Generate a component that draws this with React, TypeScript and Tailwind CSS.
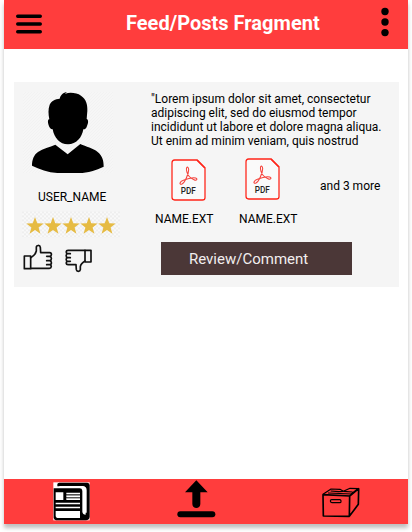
const STAR_CENTERS = [75, 129, 183, 237, 291];

function MenuIcon() {
  return (
    <svg className="h-5 w-[27px]" viewBox="0 0 27 20" stroke="#000" strokeWidth="3.4" strokeLinecap="round">
      <path d="M2.7 2.3H25.3M2.7 10H25.3M2.7 17.7H25.3" />
    </svg>
  );
}

function MoreIcon() {
  return (
    <svg className="h-[30px] w-2" viewBox="0 0 8 30">
      <circle cx="4" cy="4.5" r="3.7" />
      <circle cx="4" cy="15" r="3.7" />
      <circle cx="4" cy="25.6" r="3.7" />
    </svg>
  );
}

function Avatar() {
  return (
    <svg className="ml-[9px] h-[81px] w-[90px]" viewBox="39 42 270 243">
      <defs>
        <pattern id="stripes" width="9" height="9" patternUnits="userSpaceOnUse">
          <path d="M0 9L9 0" stroke="#eeeeee" strokeWidth="1.5" />
        </pattern>
      </defs>
      <rect x="39" y="42" width="270" height="243" fill="#f6f6f6" />
      <rect x="39" y="42" width="270" height="243" fill="url(#stripes)" />
      <path d="M149 62C152 51 160 43 171 43C167 45 166 46 166 47C181 42 201 45 213 53C229 63 233 82 232 99L230 123C236 125 235 135 231 144C229 151 226 154 220 154C216 179 199 199 174 199C149 199 133 180 128 154C121 154 118 149 116 142C113 132 113 124 118 124C115 108 114 94 119 80C124 69 136 63 149 62Z" />
      <path d="M136 200L173 229L211 198C228 206 249 210 263 222C278 234 281 249 281 266C258 276 235 285 207 285H142C114 283 88 274 66 263C66 246 71 231 84 222C99 212 119 207 136 200Z" />
    </svg>
  );
}

function Stars() {
  return (
    <svg className="ml-2 mt-[7px] h-[27px] w-[98px]" viewBox="36 95 294 81">
      <defs>
        <pattern id="checks" width="12" height="12" patternUnits="userSpaceOnUse">
          <rect width="12" height="12" fill="#f9f9f9" />
          <path d="M0 0H6V6H0ZM6 6H12V12H6Z" fill="#eeeeee" />
        </pattern>
      </defs>
      <rect x="36" y="95" width="294" height="80" fill="url(#checks)" />
      {STAR_CENTERS.map((x) => (
        <path
          key={x}
          transform={`translate(${x} 141)`}
          fill="#e6bb43"
          d="M0 -28L6.8 -9.2L26 -8.8L10.8 3.2L16.3 22.5L0 11.3L-16.3 22.5L-10.8 3.2L-26 -8.8L-6.8 -9.2Z"
        />
      ))}
    </svg>
  );
}

function Thumbs() {
  return (
    <svg className="ml-[5px] mt-[5px] h-[34px] w-[80px]" viewBox="27 192 240 102" fill="none" stroke="#111" strokeWidth="5" strokeLinejoin="round" strokeLinecap="round">
      <g>
        <path d="M43 231H62V269H43Z" />
        <path d="M62 236C71 231 77 225 79 216V205C79 198 90 197 91 205L92 221H119C126 221 126 231 119 232H110M119 232C126 233 126 244 119 245H110M119 245C126 246 126 257 119 257H110M119 257C126 258 125 268 118 268H62" />
      </g>
      <g>
        <path d="M225 214H243V249H225Z" />
        <path d="M225 214H174C167 214 167 223 173 224H181M173 224C167 225 167 235 173 236H181M173 236C167 237 167 246 173 247H181M173 247C167 248 167 257 174 257H198L199 272C200 279 210 279 211 272V263C212 255 218 250 225 246" />
      </g>
    </svg>
  );
}

function PdfIcon() {
  return (
    <svg className="h-[42px] w-[35px]" viewBox="80 28 105 126" fill="none">
      <path d="M91 31H158L182 55V144Q182 151 174 151H91Q83 151 83 143V39Q83 31 91 31Z" fill="#fafafa" stroke="#ff2519" strokeWidth="3.8" />
      <path d="M158 31L182 55" stroke="#ff2519" strokeWidth="5" />
      <path d="M128 68C123 50 132 48 133 60C133 73 121 99 113 103C103 106 106 96 117 92C129 87 145 83 154 85C161 88 157 94 149 90C139 86 131 78 128 68Z" stroke="#f5423b" strokeWidth="3.2" />
      <g transform="translate(109 134) scale(0.98 1)">
        <text fill="#222" fontSize="25" fontWeight="500" className="font-['Roboto',sans-serif]">PDF</text>
      </g>
    </svg>
  );
}

function FileItem({ raised = false }: { raised?: boolean }) {
  return (
    <div className="flex w-[84px] flex-col">
      <div className={raised ? "ml-[10px] h-[53px]" : "ml-5 h-[53px] pt-px"}>
        <PdfIcon />
      </div>
      <span className="ml-1 mt-px text-[12px] leading-[14px]">NAME.EXT</span>
    </div>
  );
}

function NewsIcon() {
  return (
    <svg className="h-[39px] w-[37px]" viewBox="159 35 111 117">
      <rect x="160" y="36" width="109" height="114" fill="#fff" />
      <path d="M172 48V42Q172 37 178 37H262Q269 38 269 45V140Q267 150 258 150H168Q162 149 161 142V54H239Q246 54 247 61V124Q248 133 257 133V55Q256 48 248 48Z" />
      <path d="M178 50H248Q257 51 257 60V127" fill="none" stroke="#fff" strokeWidth="6" />
      <path d="M167 66H190V89H167ZM199 67H240V72H199ZM199 76H240V80H199ZM199 84H240V89H199ZM167 97H240V102H167ZM167 109H240V114H167ZM167 122H240V143H172Q167 142 167 137Z" fill="#fff" />
      <path d="M199 75H240M199 83H240" stroke="#aaa" strokeWidth="3" />
    </svg>
  );
}

function UploadIcon() {
  return (
    <svg className="h-[38px] w-[39px]" viewBox="80 29 117 114">
      <path d="M138 30L172 66H150V101C150 117 126 117 126 101V66H104Z" />
      <path d="M90 132H186" stroke="#000" strokeWidth="18" strokeLinecap="round" />
    </svg>
  );
}

function BoxIcon() {
  return (
    <svg className="h-[31px] w-[38px]" viewBox="65 51 114 93" fill="none" stroke="#000" strokeWidth="5" strokeLinejoin="round">
      <path d="M68 74L148 78L147 139L69 138ZM148 78L175 56L174 103L147 139" />
      <path d="M68 73L92 57L119 58L129 64L149 55L175 56M83 69L153 72L170 58M91 63L115 65L128 64M130 64L157 66" strokeWidth="3.5" />
      <path d="M94 89H119Q123 90 122 95Q122 98 118 98H95Q90 97 90 93Q90 89 94 89Z" strokeWidth="3.5" />
    </svg>
  );
}

export default function App() {
  return (
    <div className="h-[532px] w-[412px] overflow-hidden bg-white pl-1 font-['Roboto',sans-serif] text-black">
      <main className="flex h-[524px] w-[404px] flex-col bg-white shadow-[0_4px_4px_rgba(0,0,0,0.25)]">
        <header className="flex h-[49px] shrink-0 items-start bg-[#ff3d3d]">
          <div className="ml-[11px] mt-[14px]"><MenuIcon /></div>
          <h1 className="ml-[84px] mt-[11px] w-[200px] whitespace-nowrap text-[20px] font-bold leading-6 tracking-[0.02px] text-white">Feed/Posts Fragment</h1>
          <div className="ml-[55px] mt-[7px]"><MoreIcon /></div>
        </header>

        <section className="flex-1 pl-[10px] pt-[33px]">
          <article className="flex h-[205px] w-[385px] bg-[#f5f5f5]">
            <div className="flex w-[137px] flex-col pt-[10px]">
              <Avatar />
              <span className="ml-6 mt-[17px] text-[12px] leading-[14px]">USER_NAME</span>
              <Stars />
              <Thumbs />
            </div>
            <div className="flex flex-1 flex-col pt-[10px]">
              <p className="whitespace-nowrap text-[12px] leading-[14px]">
                &quot;Lorem ipsum dolor sit amet, consectetur<br />
                adipiscing elit, sed do eiusmod tempor<br />
                incididunt ut labore et dolore magna aliqua.<br />
                Ut enim ad minim veniam, quis nostrud
              </p>
              <div className="mt-[10px] flex">
                <FileItem />
                <FileItem raised />
                <span className="ml-px mt-[21px] whitespace-nowrap text-[12px] leading-[14px]">and 3 more</span>
              </div>
              <button className="ml-[10px] mt-4 h-[33px] w-[191px] shrink-0 bg-[#4b3737] pl-7 text-left text-[15px] leading-[34px] text-[#f2eeee]">Review/Comment</button>
            </div>
          </article>
        </section>

        <footer className="flex h-[45px] shrink-0 items-start bg-[#ff3d3d]">
          <div className="ml-[49px] mt-[3px]"><NewsIcon /></div>
          <div className="ml-[87px] mt-px"><UploadIcon /></div>
          <div className="ml-[106px] mt-2"><BoxIcon /></div>
        </footer>
      </main>
    </div>
  );
}
